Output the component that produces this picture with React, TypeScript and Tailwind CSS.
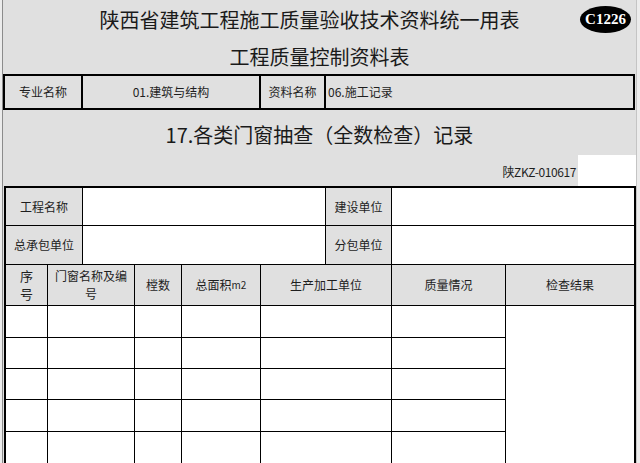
import React from 'react';

const cjk = "font-['Noto_Sans_CJK_SC','Liberation_Sans',sans-serif]";

function Cell({ children, grey = false, className = '' }: { children?: React.ReactNode; grey?: boolean; className?: string }) {
  return (
    <div className={`flex items-center justify-center text-[12px] leading-none text-[#1e1e1e] ${grey ? 'bg-[#e0e0e0]' : 'bg-white'} ${className}`}>
      {children}
    </div>
  );
}

export default function App() {
  const dataRows = [0, 1, 2, 3, 4];

  return (
    <div className={`flex h-[463px] w-[640px] overflow-hidden bg-[#e0e0e0] ${cjk}`}>
      {/* window edge */}
      <div className="w-[2px] bg-[#ececec]" />
      <div className="w-px bg-[#8c8c8c]" />

      <div className="relative flex w-[633px] flex-col">
        {/* titles */}
        <div className="flex h-[74px] flex-col">
          <div className="flex h-[40px] items-center justify-center pr-[20px] text-[20px] leading-none text-[#1a1a1a]">
            陕西省建筑工程施工质量验收技术资料统一用表
          </div>
          <div className="flex h-[34px] items-center justify-center text-[20px] leading-none text-[#1a1a1a]">
            工程质量控制资料表
          </div>
        </div>

        <div className="absolute left-[577px] top-[6px] flex h-[27px] w-[51px] items-center justify-center rounded-[50%] bg-black">
          <span className="font-['Liberation_Serif',serif] text-[15px] font-bold leading-none text-white">C1226</span>
        </div>

        {/* 专业 / 资料 row */}
        <div className="flex h-[37px] w-[632px] border-2 border-black text-[12px] leading-none text-[#1e1e1e]">
          <div className="flex w-[78px] items-center justify-center border-r-2 border-black">专业名称</div>
          <div className="flex w-[178px] items-center justify-center border-r-2 border-black">01.建筑与结构</div>
          <div className="flex w-[65px] items-center justify-center border-r-2 border-black">资料名称</div>
          <div className="flex flex-1 items-center pl-[2px]">06.施工记录</div>
        </div>

        {/* section title */}
        <div className="flex h-[76px] flex-col">
          <div className="flex h-[45px] items-center justify-center pt-[4px] text-[20px] leading-none text-[#1a1a1a]">
            17.各类门窗抽查（全数检查）记录
          </div>
          <div className="flex h-[31px] items-center justify-end">
            <span className="pr-[2px] pt-[3px] text-[12px] leading-none tracking-[-0.4px] text-[#1e1e1e]">陕ZKZ-010617</span>
            <div className="h-[31px] w-[58px] bg-white" />
          </div>
        </div>

        {/* main table */}
        <div className="ml-px flex w-[632px] flex-col gap-px border-x-2 border-t-2 border-black bg-black">
          <div className="grid grid-cols-[76px_242px_65px_242px] grid-rows-[37px_38px] gap-px">
            <Cell grey>工程名称</Cell>
            <Cell />
            <Cell grey>建设单位</Cell>
            <Cell />
            <Cell grey>总承包单位</Cell>
            <Cell />
            <Cell grey>分包单位</Cell>
            <Cell />
          </div>

          <div className="grid grid-cols-[41px_86px_46px_78px_130px_113px_128px] grid-rows-[40px_31px_30px_30px_31px_31px] gap-px">
            <Cell grey className="!items-start pt-[2px]">
              <div className="flex flex-col items-center text-[13px]">
                <span className="leading-[18px]">序</span>
                <span className="leading-[18px]">号</span>
              </div>
            </Cell>
            <Cell grey className="!items-start pt-[2px]">
              <div className="flex flex-col items-center">
                <span className="leading-[18px]">门窗名称及编</span>
                <span className="leading-[18px]">号</span>
              </div>
            </Cell>
            <Cell grey>樘数</Cell>
            <Cell grey>
              总面积<span className="text-[10px]">m2</span>
            </Cell>
            <Cell grey>生产加工单位</Cell>
            <Cell grey>质量情况</Cell>
            <Cell grey>检查结果</Cell>

            {dataRows.map((r) => (
              <React.Fragment key={r}>
                <Cell />
                <Cell />
                <Cell />
                <Cell />
                <Cell />
                <Cell />
                {r === 0 && <Cell className="row-span-5" />}
              </React.Fragment>
            ))}
          </div>
        </div>
      </div>

      {/* right edge */}
      <div className="w-[4px] border-l border-[#c4c4c4] bg-[#ececec]" />
    </div>
  );
}
